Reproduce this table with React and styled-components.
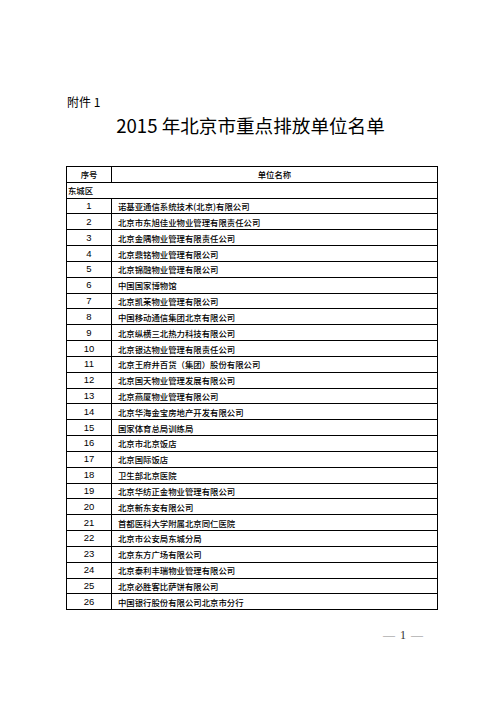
import React from "react";
import styled, { createGlobalStyle } from "styled-components";

const units = [
  "诺基亚通信系统技术(北京)有限公司",
  "北京市东旭佳业物业管理有限责任公司",
  "北京金隅物业管理有限责任公司",
  "北京鼎铭物业管理有限公司",
  "北京锦融物业管理有限公司",
  "中国国家博物馆",
  "北京凯莱物业管理有限公司",
  "中国移动通信集团北京有限公司",
  "北京纵横三北热力科技有限公司",
  "北京银达物业管理有限责任公司",
  "北京王府井百货（集团）股份有限公司",
  "北京国天物业管理发展有限公司",
  "北京燕厦物业管理有限公司",
  "北京华海金宝房地产开发有限公司",
  "国家体育总局训练局",
  "北京市北京饭店",
  "北京国际饭店",
  "卫生部北京医院",
  "北京华纺正金物业管理有限公司",
  "北京新东安有限公司",
  "首都医科大学附属北京同仁医院",
  "北京市公安局东城分局",
  "北京东方广场有限公司",
  "北京泰利丰瑞物业管理有限公司",
  "北京必胜客比萨饼有限公司",
  "中国银行股份有限公司北京市分行",
];

const GlobalStyle = createGlobalStyle`
  html, body {
    margin: 0;
    padding: 0;
    background: #ffffff;
  }
`;

const Page = styled.div`
  width: 372px;
  padding: 95px 58px 0 66px;
  font-family: "Noto Sans CJK SC", "Noto Sans", sans-serif;
  color: #000;
`;

const Attachment = styled.div`
  font-size: 12px;
  line-height: 14px;
  padding-left: 1px;
`;

const Title = styled.h1`
  margin: 4px 0 0;
  font-size: 18.6px;
  line-height: 24px;
  font-weight: 400;
  text-align: center;
  padding-right: 3px;
`;

const Table = styled.table`
  margin-top: 29px;
  width: 372px;
  border-collapse: collapse;
  table-layout: fixed;
  font-size: 8.4px;
`;

const Cell = styled.td`
  height: 14.84px;
  padding: 0 ${(p) => (p.$num ? "0" : "6px")};
  border: 1px solid #000;
  line-height: 10px;
  white-space: nowrap;
  text-align: ${(p) => (p.$center ? "center" : "left")};
  font-family: ${(p) =>
    p.$num
      ? '"Liberation Sans", Arial, sans-serif'
      : '"Noto Sans CJK SC", sans-serif'};
  font-size: ${(p) => (p.$num ? "9.5px" : "8.4px")};
  font-weight: 500;
`;

const District = styled(Cell)`
  padding-left: 1px;
`;

const Footer = styled.div`
  margin-top: 18px;
  padding-right: 15px;
  text-align: right;
  font-family: "Liberation Serif", serif;
  font-size: 12px;
  color: #333;
  word-spacing: 2px;
`;

const Dash = styled.span`
  color: #888;
`;

export default function App() {
  return (
    <>
      <GlobalStyle />
      <Page>
        <Attachment>附件 1</Attachment>
        <Title>2015 年北京市重点排放单位名单</Title>
        <Table>
          <colgroup>
            <col style={{ width: "45px" }} />
            <col />
          </colgroup>
          <tbody>
            <tr>
              <Cell $center>序号</Cell>
              <Cell $center>单位名称</Cell>
            </tr>
            <tr>
              <District colSpan={2}>东城区</District>
            </tr>
            {units.map((name, i) => (
              <tr key={name}>
                <Cell $center $num>
                  {i + 1}
                </Cell>
                <Cell>{name}</Cell>
              </tr>
            ))}
          </tbody>
        </Table>
        <Footer>
          <Dash>—</Dash> 1 <Dash>—</Dash>
        </Footer>
      </Page>
    </>
  );
}
